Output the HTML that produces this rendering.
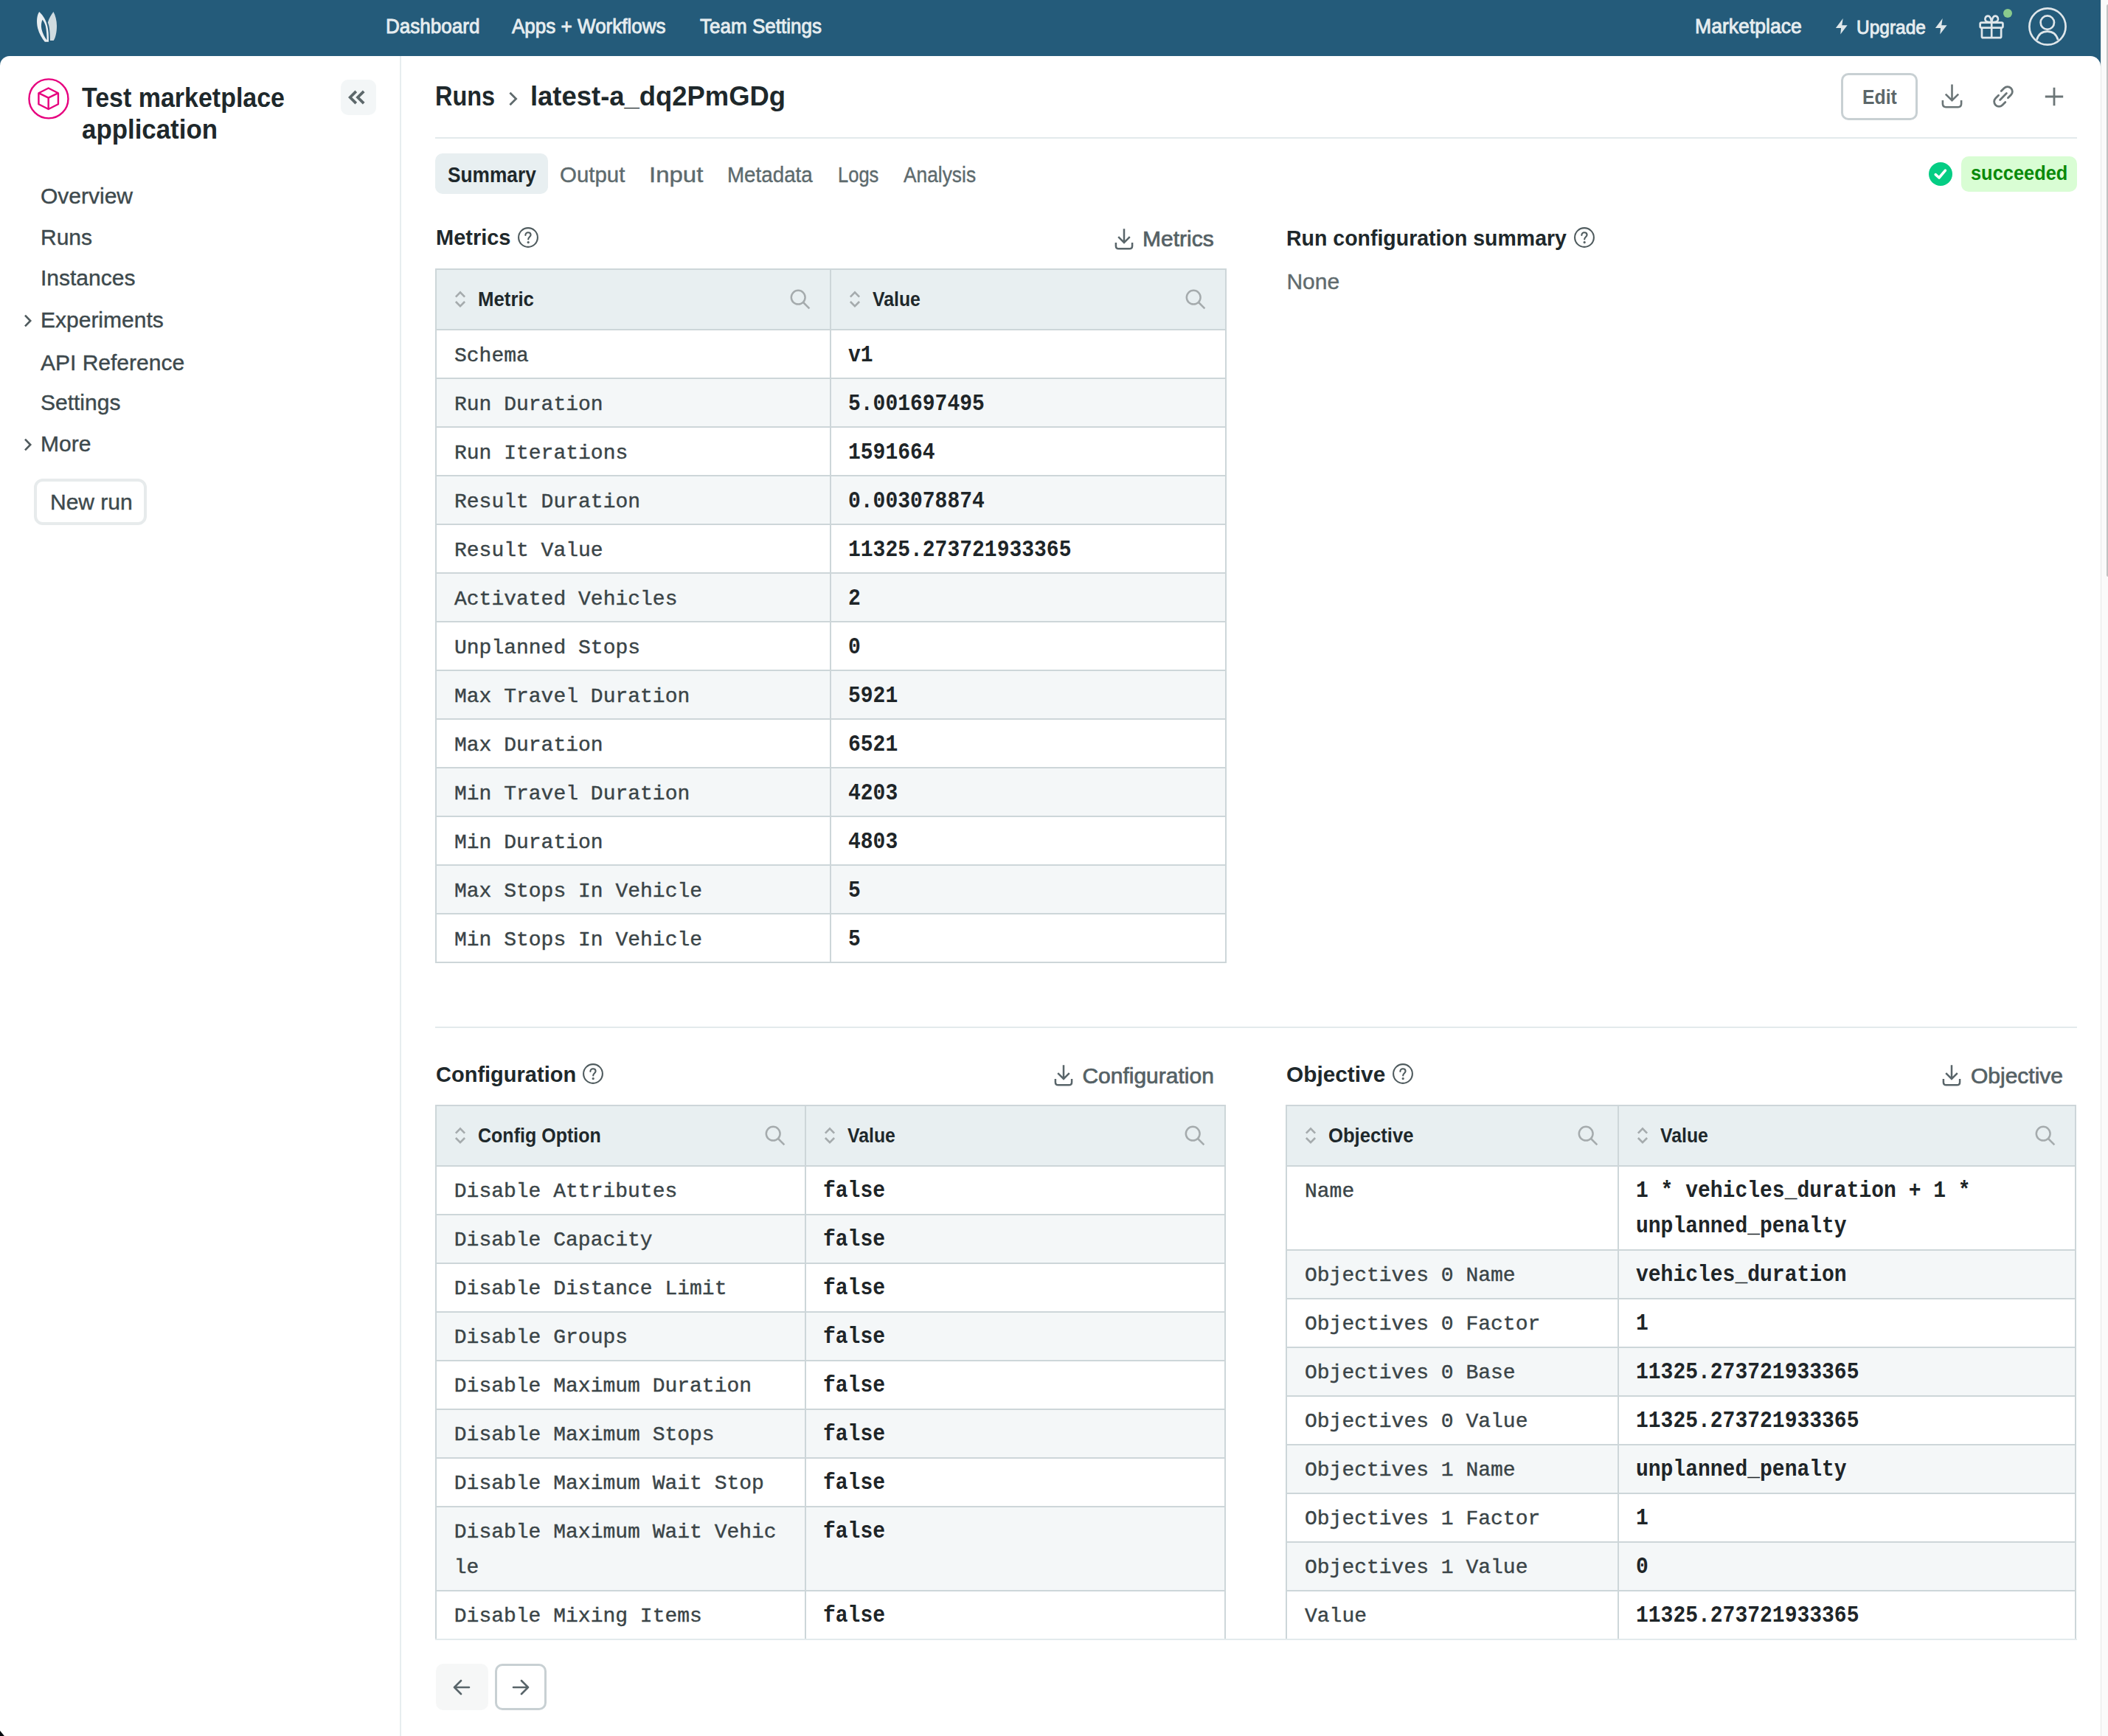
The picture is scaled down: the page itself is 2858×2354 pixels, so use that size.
<!DOCTYPE html>
<html>
<head>
<meta charset="utf-8">
<style>
html{zoom:2;}
*{box-sizing:border-box;margin:0;padding:0;}
body{width:1429px;height:1177px;overflow:hidden;background:#245b7a;font-family:"Liberation Sans",sans-serif;position:relative;color:#1e282b;}
.abs{position:absolute;}
.top{position:absolute;left:0;top:0;width:1429px;height:38px;background:#245b7a;}
.nav{position:absolute;top:0;height:38px;line-height:38px;color:#e6edf0;font-size:14px;font-weight:400;white-space:nowrap;-webkit-text-stroke:0.45px #e6edf0;}
.panel{position:absolute;left:0;top:38px;width:1424px;height:1139px;background:#fff;border-radius:6.5px 7px 0 0;overflow:hidden;}
.sbar{position:absolute;left:1424px;top:0;width:5px;height:1177px;background:#fafafa;border-left:0.5px solid #e6e6e6;}
.thumb{position:absolute;left:1428px;top:3px;width:1px;height:388px;background:#c1c1c1;border-radius:1px 0 0 1px;}
.side{position:absolute;left:0;top:0;width:272px;height:1139px;border-right:1px solid #e7edef;}
.sn{position:absolute;left:27.5px;font-size:15px;line-height:20px;color:#3d494d;white-space:nowrap;-webkit-text-stroke:0.2px #3d494d;}
.chev{position:absolute;left:16px;}

.mt{position:absolute;white-space:nowrap;}
.crumb{font-size:18px;line-height:24px;font-weight:700;color:#1e282b;}
.tab{position:absolute;top:70.5px;font-size:14.5px;line-height:20px;color:#5d6a6d;white-space:nowrap;-webkit-text-stroke:0.2px #5d6a6d;}
.h2{position:absolute;font-size:15px;line-height:20px;font-weight:700;color:#1e282b;white-space:nowrap;}
.dl{position:absolute;font-size:15px;line-height:20px;font-weight:400;color:#556165;white-space:nowrap;-webkit-text-stroke:0.35px #556165;}
.tbl{position:absolute;border:1px solid #cdd6d9;background:#fff;overflow:hidden;}
.th{position:relative;height:41px;background:#e8eff1;border-bottom:1px solid #cdd6d9;}
.tr{position:relative;border-bottom:1px solid #cdd6d9;font-family:"Liberation Mono",monospace;font-size:15.5px;line-height:24px;}
.tr.s{background:#f4f7f8;}
.tr.last{border-bottom:none;}
.c1 svg,.c2 svg,.sort svg,.srch svg{display:block;}
.c1,.c2{position:absolute;top:0;padding-top:4.9px;white-space:nowrap;transform:scaleX(0.9032);transform-origin:0 0;}
.c1{color:#3a4447;-webkit-text-stroke:0.2px #3a4447;font-size:14px;padding-top:5.3px !important;transform:none !important;}
.c2{color:#1e2528;font-weight:700;}
.vd{position:absolute;top:0;bottom:0;width:1px;background:#cdd6d9;}
.hl{position:absolute;top:0;font-size:13.5px;line-height:40px;font-weight:700;color:#1e282b;white-space:nowrap;}
.sort{position:absolute;top:14px;line-height:0;}
.srch{position:absolute;top:13.2px;line-height:0;}
</style>
</head>
<body>
<div class="top">
  <svg class="abs" style="left:24px;top:7px" width="16" height="22" viewBox="0 0 16 22">
    <path d="M2.6 1.05 C0.9 3.5 0.6 8 1.6 12.2 C2.5 15.8 4.5 19 6.4 21.35 L9 21.35 C9.1 17 8.9 13.5 8.1 10.5 C7.3 7.3 5.6 3.8 2.6 1.05 Z M4.75 6.4 C4 8.2 3.7 10.5 4.2 12.8 C4.8 15.5 6.2 18.2 7.8 20.3 C7.8 17 7.5 13.5 6.9 10.6 C6.4 8.8 5.7 7.5 4.75 6.4 Z" fill="#e8eef1" fill-rule="evenodd"/>
    <path d="M12.2 1.05 C10.8 2.8 9.4 5.3 8.4 8.2 C9.3 10.2 9.9 13.5 9.95 20.5 L12.35 20.5 C13.8 18.3 14.5 14.5 14.5 10.5 C14.5 7 13.6 3.5 12.2 1.05 Z" fill="#d0dbe0"/>
  </svg>
  <div class="nav" style="left:261.3px;top:-1.2px;transform:scaleX(0.93);transform-origin:0 0;">Dashboard</div>
  <div class="nav" style="left:347.2px;top:-1.2px;transform:scaleX(0.93);transform-origin:0 0;">Apps + Workflows</div>
  <div class="nav" style="left:474.6px;top:-1.2px;transform:scaleX(0.93);transform-origin:0 0;">Team Settings</div>
  <div class="nav" style="left:1149.2px;top:-0.8px;transform:scaleX(0.95);transform-origin:0 0;">Marketplace</div>
  <svg class="abs" style="left:1244px;top:12px" width="9" height="12" viewBox="0 0 9 12"><path d="M5.35 0.55 L0.45 7 L4.05 7 L3.65 11.25 L8.3 5.1 L4.65 5.1 Z" fill="#dfe7ea"/></svg>
  <div class="nav" style="left:1258.5px;top:-0.5px;font-size:13.2px;transform:scaleX(0.928);transform-origin:0 0;">Upgrade</div>
  <svg class="abs" style="left:1311.5px;top:12px" width="9" height="12" viewBox="0 0 9 12"><path d="M5.35 0.55 L0.45 7 L4.05 7 L3.65 11.25 L8.3 5.1 L4.65 5.1 Z" fill="#dfe7ea"/></svg>
  <svg class="abs" style="left:1340px;top:8px" width="20" height="20" viewBox="0 0 20 20" fill="none" stroke="#dfe6ea" stroke-width="1.35" stroke-linejoin="round">
    <rect x="2.325" y="7.3" width="15.4" height="3.5" rx="0.9"/>
    <path d="M3.475 10.8 V16.7 Q3.475 17.6 4.375 17.6 H15.675 Q16.575 17.6 16.575 16.7 V10.8"/>
    <path d="M10.1 7.3 V17.6"/>
    <path d="M10.1 7.1 C8.6 7.1 6.7 6.9 6 6 C5.2 4.9 6 2.8 7.6 2.8 C9.1 2.8 9.8 4.9 10.1 7.1 C10.4 4.9 11.1 2.8 12.6 2.8 C14.2 2.8 15 4.9 14.2 6 C13.5 6.9 11.6 7.1 10.1 7.1"/>
  </svg>
  <div class="abs" style="left:1357.9px;top:5.9px;width:6px;height:6px;border-radius:50%;background:#8acb8d;"></div>
  <svg class="abs" style="left:1374px;top:4px" width="28" height="28" viewBox="0 0 28 28" fill="none" stroke="#dfe6ea" stroke-width="1.35">
    <circle cx="14" cy="14" r="12.3"/>
    <circle cx="13.9" cy="11.3" r="4.6"/>
    <path d="M6.7 23 C7.8 19.3 10.5 17.3 13.9 17.3 C17.3 17.3 20 19.3 21.1 23"/>
  </svg>
</div>
<div class="sbar"></div>
<div class="thumb"></div>

<div class="panel">
  <div class="side">
    <svg class="abs" style="left:19px;top:15px" width="28" height="28" viewBox="0 0 28 28" fill="none" stroke="#e6007e" stroke-width="1.2" stroke-linejoin="round">
      <circle cx="13.98" cy="13.95" r="13.25"/>
      <path d="M13.83 6.75 L20.46 10.1 V17.6 L13.83 21 L7.2 17.6 V10.1 Z"/>
      <path d="M7.2 10.1 L13.83 13.3 L20.46 10.1 M13.83 13.3 V21"/>
    </svg>
    <div class="abs" style="left:55.7px;top:17.4px;font-size:18.5px;line-height:21.7px;font-weight:700;color:#1e282b;white-space:nowrap;transform:scaleX(0.918);transform-origin:0 0;">Test marketplace</div>
    <div class="abs" style="left:55.7px;top:39.1px;font-size:18.5px;line-height:21.7px;font-weight:700;color:#1e282b;white-space:nowrap;transform:scaleX(0.942);transform-origin:0 0;">application</div>
    <div class="abs" style="left:231px;top:16px;width:24px;height:24px;border-radius:5px;background:#f3f6f7;">
      <svg class="abs" style="left:5px;top:7px" width="12" height="10" viewBox="0 0 12 10" fill="none" stroke="#5d686b" stroke-width="1.9"><path d="M5.4 0.9 L1.3 5 L5.4 9.1 M10.6 0.9 L6.5 5 L10.6 9.1"/></svg>
    </div>
    <div class="sn" style="top:84.8px;">Overview</div>
    <div class="sn" style="top:112.75px;">Runs</div>
    <div class="sn" style="top:140.6px;">Instances</div>
    <svg class="chev" style="top:174.75px" width="6" height="9" viewBox="0 0 6 9" fill="none" stroke="#4f5a5d" stroke-width="1.3"><path d="M1 0.8 L4.6 4.5 L1 8.2"/></svg>
    <div class="sn" style="top:168.8px;">Experiments</div>
    <div class="sn" style="top:197.9px;">API Reference</div>
    <div class="sn" style="top:225.1px;">Settings</div>
    <svg class="chev" style="top:259.05px" width="6" height="9" viewBox="0 0 6 9" fill="none" stroke="#4f5a5d" stroke-width="1.3"><path d="M1 0.8 L4.6 4.5 L1 8.2"/></svg>
    <div class="sn" style="top:253.2px;">More</div>
    <div class="abs" style="left:23px;top:286.7px;width:76.6px;height:31.5px;border:2px solid #e7ebec;border-radius:6px;"></div>
    <div class="sn" style="left:34px;top:292.5px;">New run</div>
  </div>
  <!-- MAIN -->
<div class="main">
<div class="mt crumb" style="left:294.85px;top:15.7px;transform:scaleX(0.901);transform-origin:0 0;">Runs</div>
<svg class="abs" style="left:344.5px;top:24px" width="7" height="10" viewBox="0 0 7 10" fill="none" stroke="#5f6a6d" stroke-width="1.4"><path d="M1.2 0.9 L5.3 5 L1.2 9.1"/></svg>
<div class="mt crumb" style="left:359.3px;top:15.7px;transform:scaleX(1.0116);transform-origin:0 0;">latest-a_dq2PmGDg</div>
<div class="abs" style="left:1248px;top:11.7px;width:52px;height:31.6px;border:1.5px solid #c8d0d3;border-radius:5px;"></div>
<div class="mt" style="left:1262.6px;top:16.1px;font-size:14px;line-height:24px;font-weight:700;color:#5b6669;transform:scaleX(0.885);transform-origin:0 0;">Edit</div>
<svg class="abs" style="left:1315.8px;top:19.2px" width="14.5" height="16.5" viewBox="0 0 14.5 16.5" fill="none" stroke="#6b7577" stroke-width="1.3"><path d="M7.25 0.3 V11 M2.9 6.8 L7.25 11.1 L11.6 6.8 M0.95 11 V13.4 Q0.95 15.6 3.1 15.6 H11.4 Q13.55 15.6 13.55 13.4 V11"/></svg>
<svg class="abs" style="left:1350px;top:19.5px" width="16" height="16" viewBox="0 0 16 16" fill="none" stroke="#6b7577" stroke-width="1.4" stroke-linecap="round"><path d="M6.6 4.3 L8.6 2.3 C9.9 1 11.9 1 13.2 2.3 C14.5 3.6 14.5 5.6 13.2 6.9 L11.2 8.9 M9.4 11.7 L7.4 13.7 C6.1 15 4.1 15 2.8 13.7 C1.5 12.4 1.5 10.4 2.8 9.1 L4.8 7.1 M5.8 10.2 L10.2 5.8"/></svg>
<svg class="abs" style="left:1386px;top:21px" width="13" height="13" viewBox="0 0 13 13" fill="none" stroke="#6b7577" stroke-width="1.4"><path d="M6.5 0.4 V12.6 M0.4 6.5 H12.6"/></svg>
<div class="abs" style="left:295px;top:55px;width:1113px;height:1px;background:#e3eaec;"></div>
<div class="abs" style="left:295px;top:66px;width:76.4px;height:27.7px;border-radius:5px;background:#e8eff1;"></div>
<div class="tab" style="left:303.5px;color:#1e282b;font-weight:700;-webkit-text-stroke:0;transform:scaleX(0.906);transform-origin:0 0;">Summary</div>
<div class="tab" style="left:379.7px;transform:scaleX(1.015);transform-origin:0 0;">Output</div>
<div class="tab" style="left:440px;transform:scaleX(1.137);transform-origin:0 0;">Input</div>
<div class="tab" style="left:493.2px;transform:scaleX(0.957);transform-origin:0 0;">Metadata</div>
<div class="tab" style="left:568.2px;transform:scaleX(0.88);transform-origin:0 0;">Logs</div>
<div class="tab" style="left:612.35px;transform:scaleX(0.908);transform-origin:0 0;">Analysis</div>
<svg class="abs" style="left:1307.5px;top:72px" width="16" height="16" viewBox="0 0 16 16"><circle cx="8" cy="8" r="8" fill="#05cd84"/><path d="M4.6 8.3 L7 10.5 L11.2 5.6" fill="none" stroke="#fff" stroke-width="1.8" stroke-linecap="round" stroke-linejoin="round"/></svg>
<div class="abs" style="left:1329.5px;top:67.9px;width:78.5px;height:24px;border-radius:5px;background:#d9fdd4;"></div>
<div class="mt" style="left:1336px;top:69.5px;font-size:14px;line-height:20px;font-weight:700;color:#0a8a0a;transform:scaleX(0.907);transform-origin:0 0;">succeeded</div>
<div class="h2" style="left:295.4px;top:113.2px;transform:scaleX(0.966);transform-origin:0 0;">Metrics</div>
<div class="abs" style="left:350.7px;top:115.5px"><svg width="15" height="15" viewBox="0 0 15 15" fill="none" stroke="#4f5b5e" stroke-width="1.05"><circle cx="7.5" cy="7.5" r="6.45"/><path d="M5.7 6 C5.7 4.8 6.5 4.1 7.5 4.1 C8.5 4.1 9.3 4.8 9.3 5.8 C9.3 7.1 7.6 7.2 7.6 8.7" stroke-linecap="round"/><circle cx="7.6" cy="10.8" r="0.3" fill="#4f5b5e"/></svg></div>
<div class="abs" style="left:755.5px;top:116.5px"><svg width="13" height="15" viewBox="0 0 13 15" fill="none" stroke="#59656a" stroke-width="1.25" stroke-linecap="butt" stroke-linejoin="miter"><path d="M6.5 0.6 V10.2 M2.6 6.1 L6.5 10 L10.4 6.1 M0.95 10 V12.2 Q0.95 14.1 2.85 14.1 H10.15 Q12.05 14.1 12.05 12.2 V10"/></svg></div>
<div class="dl" style="left:774.5px;top:114.1px;">Metrics</div>
<div class="tbl" style="left:295px;top:144px;width:536.5px;">
<div class="th">
<div class="sort" style="left:12px"><svg width="8" height="12" viewBox="0 0 8 12" fill="none" stroke="#a5abad" stroke-width="1.3"><path d="M0.95 4.3 L4 1.2 L7.05 4.3 M0.95 7.5 L4 10.6 L7.05 7.5"/></svg></div>
<div class="hl" style="left:28px;transform:scaleX(0.955);transform-origin:0 0;">Metric</div>
<div class="srch" style="left:239.5px"><svg width="14" height="14" viewBox="0 0 14 14" fill="none" stroke="#a5abad" stroke-width="1.25"><circle cx="5.6" cy="5.6" r="4.7"/><path d="M9 9 L13.2 13.2"/></svg></div>
<div class="sort" style="left:279.5px"><svg width="8" height="12" viewBox="0 0 8 12" fill="none" stroke="#a5abad" stroke-width="1.3"><path d="M0.95 4.3 L4 1.2 L7.05 4.3 M0.95 7.5 L4 10.6 L7.05 7.5"/></svg></div>
<div class="hl" style="left:295.5px;transform:scaleX(0.92);transform-origin:0 0;">Value</div>
<div class="srch" style="left:507.5px"><svg width="14" height="14" viewBox="0 0 14 14" fill="none" stroke="#a5abad" stroke-width="1.25"><circle cx="5.6" cy="5.6" r="4.7"/><path d="M9 9 L13.2 13.2"/></svg></div>
</div>
<div class="tr" style="height:33px"><div class="c1" style="left:12px">Schema</div><div class="c2" style="left:278.9px">v1</div></div>
<div class="tr s" style="height:33px"><div class="c1" style="left:12px">Run Duration</div><div class="c2" style="left:278.9px">5.001697495</div></div>
<div class="tr" style="height:33px"><div class="c1" style="left:12px">Run Iterations</div><div class="c2" style="left:278.9px">1591664</div></div>
<div class="tr s" style="height:33px"><div class="c1" style="left:12px">Result Duration</div><div class="c2" style="left:278.9px">0.003078874</div></div>
<div class="tr" style="height:33px"><div class="c1" style="left:12px">Result Value</div><div class="c2" style="left:278.9px">11325.273721933365</div></div>
<div class="tr s" style="height:33px"><div class="c1" style="left:12px">Activated Vehicles</div><div class="c2" style="left:278.9px">2</div></div>
<div class="tr" style="height:33px"><div class="c1" style="left:12px">Unplanned Stops</div><div class="c2" style="left:278.9px">0</div></div>
<div class="tr s" style="height:33px"><div class="c1" style="left:12px">Max Travel Duration</div><div class="c2" style="left:278.9px">5921</div></div>
<div class="tr" style="height:33px"><div class="c1" style="left:12px">Max Duration</div><div class="c2" style="left:278.9px">6521</div></div>
<div class="tr s" style="height:33px"><div class="c1" style="left:12px">Min Travel Duration</div><div class="c2" style="left:278.9px">4203</div></div>
<div class="tr" style="height:33px"><div class="c1" style="left:12px">Min Duration</div><div class="c2" style="left:278.9px">4803</div></div>
<div class="tr s" style="height:33px"><div class="c1" style="left:12px">Max Stops In Vehicle</div><div class="c2" style="left:278.9px">5</div></div>
<div class="tr last" style="height:32px"><div class="c1" style="left:12px">Min Stops In Vehicle</div><div class="c2" style="left:278.9px">5</div></div>
<div class="vd" style="left:266.5px"></div>
</div>
<div class="h2" style="left:872.2px;top:113.3px;transform:scaleX(0.9497);transform-origin:0 0;">Run configuration summary</div>
<div class="abs" style="left:1066.3px;top:115.5px"><svg width="15" height="15" viewBox="0 0 15 15" fill="none" stroke="#4f5b5e" stroke-width="1.05"><circle cx="7.5" cy="7.5" r="6.45"/><path d="M5.7 6 C5.7 4.8 6.5 4.1 7.5 4.1 C8.5 4.1 9.3 4.8 9.3 5.8 C9.3 7.1 7.6 7.2 7.6 8.7" stroke-linecap="round"/><circle cx="7.6" cy="10.8" r="0.3" fill="#4f5b5e"/></svg></div>
<div class="mt" style="left:872.2px;top:143px;font-size:15px;line-height:20px;color:#5f6b6e;-webkit-text-stroke:0.2px #5f6b6e;">None</div>
<div class="abs" style="left:295px;top:657.8px;width:1113px;height:1px;background:#e3eaec;"></div>
<div class="h2" style="left:295.4px;top:680.6px;transform:scaleX(0.967);transform-origin:0 0;">Configuration</div>
<div class="abs" style="left:394.7px;top:682.65px"><svg width="15" height="15" viewBox="0 0 15 15" fill="none" stroke="#4f5b5e" stroke-width="1.05"><circle cx="7.5" cy="7.5" r="6.45"/><path d="M5.7 6 C5.7 4.8 6.5 4.1 7.5 4.1 C8.5 4.1 9.3 4.8 9.3 5.8 C9.3 7.1 7.6 7.2 7.6 8.7" stroke-linecap="round"/><circle cx="7.6" cy="10.8" r="0.3" fill="#4f5b5e"/></svg></div>
<div class="abs" style="left:714.4px;top:683.3px"><svg width="13" height="15" viewBox="0 0 13 15" fill="none" stroke="#59656a" stroke-width="1.25" stroke-linecap="butt" stroke-linejoin="miter"><path d="M6.5 0.6 V10.2 M2.6 6.1 L6.5 10 L10.4 6.1 M0.95 10 V12.2 Q0.95 14.1 2.85 14.1 H10.15 Q12.05 14.1 12.05 12.2 V10"/></svg></div>
<div class="dl" style="left:733.7px;top:681.5px;">Configuration</div>
<div class="tbl" style="left:294.9px;top:710.75px;width:536px;">
<div class="th">
<div class="sort" style="left:12px"><svg width="8" height="12" viewBox="0 0 8 12" fill="none" stroke="#a5abad" stroke-width="1.3"><path d="M0.95 4.3 L4 1.2 L7.05 4.3 M0.95 7.5 L4 10.6 L7.05 7.5"/></svg></div>
<div class="hl" style="left:28px;transform:scaleX(0.927);transform-origin:0 0;">Config Option</div>
<div class="srch" style="left:222.60000000000002px"><svg width="14" height="14" viewBox="0 0 14 14" fill="none" stroke="#a5abad" stroke-width="1.25"><circle cx="5.6" cy="5.6" r="4.7"/><path d="M9 9 L13.2 13.2"/></svg></div>
<div class="sort" style="left:262.6px"><svg width="8" height="12" viewBox="0 0 8 12" fill="none" stroke="#a5abad" stroke-width="1.3"><path d="M0.95 4.3 L4 1.2 L7.05 4.3 M0.95 7.5 L4 10.6 L7.05 7.5"/></svg></div>
<div class="hl" style="left:278.6px;transform:scaleX(0.92);transform-origin:0 0;">Value</div>
<div class="srch" style="left:507px"><svg width="14" height="14" viewBox="0 0 14 14" fill="none" stroke="#a5abad" stroke-width="1.25"><circle cx="5.6" cy="5.6" r="4.7"/><path d="M9 9 L13.2 13.2"/></svg></div>
</div>
<div class="tr" style="height:33px"><div class="c1" style="left:12px">Disable Attributes</div><div class="c2" style="left:262.0px">false</div></div>
<div class="tr s" style="height:33px"><div class="c1" style="left:12px">Disable Capacity</div><div class="c2" style="left:262.0px">false</div></div>
<div class="tr" style="height:33px"><div class="c1" style="left:12px">Disable Distance Limit</div><div class="c2" style="left:262.0px">false</div></div>
<div class="tr s" style="height:33px"><div class="c1" style="left:12px">Disable Groups</div><div class="c2" style="left:262.0px">false</div></div>
<div class="tr" style="height:33px"><div class="c1" style="left:12px">Disable Maximum Duration</div><div class="c2" style="left:262.0px">false</div></div>
<div class="tr s" style="height:33px"><div class="c1" style="left:12px">Disable Maximum Stops</div><div class="c2" style="left:262.0px">false</div></div>
<div class="tr" style="height:33px"><div class="c1" style="left:12px">Disable Maximum Wait Stop</div><div class="c2" style="left:262.0px">false</div></div>
<div class="tr s" style="height:57px"><div class="c1" style="left:12px">Disable Maximum Wait Vehic<br>le</div><div class="c2" style="left:262.0px">false</div></div>
<div class="tr last" style="height:32px"><div class="c1" style="left:12px">Disable Mixing Items</div><div class="c2" style="left:262.0px">false</div></div>
<div class="vd" style="left:249.60000000000002px"></div>
</div>
<div class="h2" style="left:872px;top:680.6px;transform:scaleX(0.994);transform-origin:0 0;">Objective</div>
<div class="abs" style="left:943.5px;top:682.5px"><svg width="15" height="15" viewBox="0 0 15 15" fill="none" stroke="#4f5b5e" stroke-width="1.05"><circle cx="7.5" cy="7.5" r="6.45"/><path d="M5.7 6 C5.7 4.8 6.5 4.1 7.5 4.1 C8.5 4.1 9.3 4.8 9.3 5.8 C9.3 7.1 7.6 7.2 7.6 8.7" stroke-linecap="round"/><circle cx="7.6" cy="10.8" r="0.3" fill="#4f5b5e"/></svg></div>
<div class="abs" style="left:1316.55px;top:683.3px"><svg width="13" height="15" viewBox="0 0 13 15" fill="none" stroke="#59656a" stroke-width="1.25" stroke-linecap="butt" stroke-linejoin="miter"><path d="M6.5 0.6 V10.2 M2.6 6.1 L6.5 10 L10.4 6.1 M0.95 10 V12.2 Q0.95 14.1 2.85 14.1 H10.15 Q12.05 14.1 12.05 12.2 V10"/></svg></div>
<div class="dl" style="left:1336px;top:681.5px;">Objective</div>
<div class="tbl" style="left:871.5px;top:710.75px;width:536px;">
<div class="th">
<div class="sort" style="left:12px"><svg width="8" height="12" viewBox="0 0 8 12" fill="none" stroke="#a5abad" stroke-width="1.3"><path d="M0.95 4.3 L4 1.2 L7.05 4.3 M0.95 7.5 L4 10.6 L7.05 7.5"/></svg></div>
<div class="hl" style="left:28px;transform:scaleX(0.95);transform-origin:0 0;">Objective</div>
<div class="srch" style="left:197.20000000000005px"><svg width="14" height="14" viewBox="0 0 14 14" fill="none" stroke="#a5abad" stroke-width="1.25"><circle cx="5.6" cy="5.6" r="4.7"/><path d="M9 9 L13.2 13.2"/></svg></div>
<div class="sort" style="left:237.20000000000005px"><svg width="8" height="12" viewBox="0 0 8 12" fill="none" stroke="#a5abad" stroke-width="1.3"><path d="M0.95 4.3 L4 1.2 L7.05 4.3 M0.95 7.5 L4 10.6 L7.05 7.5"/></svg></div>
<div class="hl" style="left:253.20000000000005px;transform:scaleX(0.92);transform-origin:0 0;">Value</div>
<div class="srch" style="left:507px"><svg width="14" height="14" viewBox="0 0 14 14" fill="none" stroke="#a5abad" stroke-width="1.25"><circle cx="5.6" cy="5.6" r="4.7"/><path d="M9 9 L13.2 13.2"/></svg></div>
</div>
<div class="tr" style="height:57px"><div class="c1" style="left:12px">Name</div><div class="c2" style="left:236.60000000000005px">1 * vehicles_duration + 1 *<br>unplanned_penalty</div></div>
<div class="tr s" style="height:33px"><div class="c1" style="left:12px">Objectives 0 Name</div><div class="c2" style="left:236.60000000000005px">vehicles_duration</div></div>
<div class="tr" style="height:33px"><div class="c1" style="left:12px">Objectives 0 Factor</div><div class="c2" style="left:236.60000000000005px">1</div></div>
<div class="tr s" style="height:33px"><div class="c1" style="left:12px">Objectives 0 Base</div><div class="c2" style="left:236.60000000000005px">11325.273721933365</div></div>
<div class="tr" style="height:33px"><div class="c1" style="left:12px">Objectives 0 Value</div><div class="c2" style="left:236.60000000000005px">11325.273721933365</div></div>
<div class="tr s" style="height:33px"><div class="c1" style="left:12px">Objectives 1 Name</div><div class="c2" style="left:236.60000000000005px">unplanned_penalty</div></div>
<div class="tr" style="height:33px"><div class="c1" style="left:12px">Objectives 1 Factor</div><div class="c2" style="left:236.60000000000005px">1</div></div>
<div class="tr s" style="height:33px"><div class="c1" style="left:12px">Objectives 1 Value</div><div class="c2" style="left:236.60000000000005px">0</div></div>
<div class="tr last" style="height:32px"><div class="c1" style="left:12px">Value</div><div class="c2" style="left:236.60000000000005px">11325.273721933365</div></div>
<div class="vd" style="left:224.20000000000005px"></div>
</div>
<div class="abs" style="left:295px;top:1072.75px;width:1113px;height:1px;background:#e3eaec;"></div>
<div class="abs" style="left:295.4px;top:1090.15px;width:35.5px;height:31.4px;border-radius:5px;background:#f6f7f7;"></div>
<svg class="abs" style="left:307px;top:1100px" width="12" height="12" viewBox="0 0 12 12" fill="none" stroke="#59656a" stroke-width="1.3" stroke-linecap="round" stroke-linejoin="round"><path d="M11 6 H1 M5.5 1.5 L1 6 L5.5 10.5"/></svg>
<div class="abs" style="left:335.4px;top:1090.15px;width:35.3px;height:31.4px;border-radius:5px;border:1.5px solid #c8d0d3;"></div>
<svg class="abs" style="left:347px;top:1100px" width="12" height="12" viewBox="0 0 12 12" fill="none" stroke="#59656a" stroke-width="1.3" stroke-linecap="round" stroke-linejoin="round"><path d="M1 6 H11 M6.5 1.5 L11 6 L6.5 10.5"/></svg>
</div>
</div>
<svg class="abs" style="left:0;top:1173px" width="4" height="4" viewBox="0 0 4 4"><path d="M0 0.4 L2.95 4 L0 4 Z" fill="#02080c"/></svg>
</body>
</html>
